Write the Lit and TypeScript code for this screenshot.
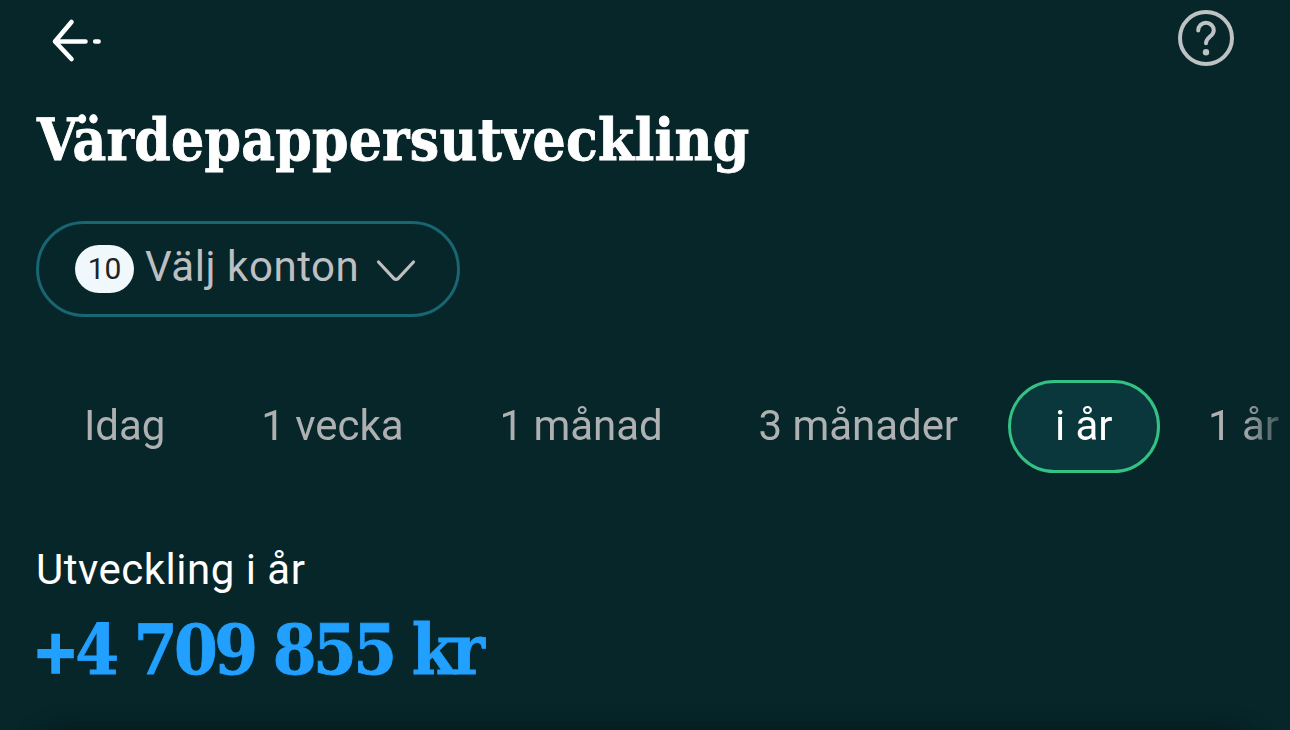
import { LitElement, css, html } from "lit";
import { classMap } from "lit/directives/class-map.js";

const PERIODS = ["Idag", "1 vecka", "1 månad", "3 månader", "i år", "1 år"];

export class PeriodTabs extends LitElement {
  static properties = {
    selected: { type: String },
  };

  declare selected: string;

  static styles = css`
    :host {
      display: block;
    }

    .tabs {
      display: flex;
      width: 1254px;
      -webkit-mask-image: linear-gradient(to right, #000 1205px, rgba(0, 0, 0, 0.35) 1244px);
      mask-image: linear-gradient(to right, #000 1205px, rgba(0, 0, 0, 0.35) 1244px);
    }

    .tab {
      flex: none;
      box-sizing: border-box;
      height: 93px;
      padding: 0 45px 1px;
      border: 3px solid transparent;
      border-radius: 47px;
      background: none;
      color: #aeb0b2;
      font: 400 42px/86px Roboto, sans-serif;
      letter-spacing: -0.05px;
      white-space: nowrap;
    }

    .tab:last-child {
      padding-right: 0;
    }

    .tab.active {
      margin-left: 1.5px;
      padding: 0 44.5px 1px;
      border-color: #35c184;
      background: #0a373c;
      color: #fff;
    }
  `;

  constructor() {
    super();
    this.selected = "i år";
  }

  render() {
    return html`
      <div class="tabs">
        ${PERIODS.map(
          (period) => html`
            <button
              type="button"
              class=${classMap({ tab: true, active: period === this.selected })}
              @click=${() => (this.selected = period)}
            >${period}</button>
          `
        )}
      </div>
    `;
  }
}

customElements.define("period-tabs", PeriodTabs);

export class AppRoot extends LitElement {
  static styles = css`
    :host {
      display: flex;
      flex-direction: column;
      box-sizing: border-box;
      height: 730px;
      padding: 0 0 0 36px;
      overflow: hidden;
      background: #062629;
      color: #fff;
      font-family: Roboto, sans-serif;
    }

    header,
    h1,
    .accounts,
    period-tabs,
    .caption,
    .amount,
    .sheet {
      flex: none;
    }

    svg {
      display: block;
      fill: none;
      stroke: currentColor;
      stroke-linecap: round;
      stroke-linejoin: round;
    }

    header {
      display: flex;
      justify-content: space-between;
      height: 80px;
      padding: 0 52px 0 8px;
    }

    .icon {
      padding: 0;
      border: 0;
      background: none;
      color: #fff;
    }

    .help {
      color: #bec2c4;
    }

    h1,
    .amount {
      margin: 0;
      font-family: "DejaVu Serif", serif;
      font-weight: 700;
      font-stretch: condensed;
      white-space: nowrap;
      -webkit-text-stroke: 0.8px currentColor;
    }

    h1 {
      height: 141px;
      padding-left: 1px;
      font-size: 58px;
      line-height: 121px;
      letter-spacing: 0.25px;
    }

    .accounts {
      display: flex;
      align-items: center;
      align-self: flex-start;
      box-sizing: border-box;
      width: 424px;
      height: 96px;
      padding: 0 36px;
      border: 3px solid #196571;
      border-radius: 48px;
      background: none;
      color: #bebfc0;
      font: 400 42px/90px Roboto, sans-serif;
      letter-spacing: 0.55px;
      white-space: nowrap;
    }

    .count {
      flex: none;
      width: 59px;
      height: 48px;
      margin-right: 11px;
      border-radius: 24px;
      background: #f0f8fb;
      color: #222;
      font-size: 30px;
      line-height: 47px;
      letter-spacing: 0;
      text-align: center;
    }

    .label {
      height: 94px;
    }

    .chevron {
      flex: none;
      margin: 4px 0 0 17px;
    }

    period-tabs {
      margin-top: 63px;
    }

    .caption {
      margin-top: 72px;
      font-size: 42px;
      line-height: 50px;
      letter-spacing: 0.5px;
    }

    .amount {
      height: 106px;
      margin-left: -3px;
      color: #21a0ff;
      font-size: 70px;
      line-height: 109px;
      letter-spacing: -3.6px;
    }

    .sign {
      font-size: 60px;
      line-height: 1;
      letter-spacing: -3px;
      vertical-align: 2px;
      -webkit-text-stroke-width: 2.6px;
    }

    /* shadow cast by the sheet below the fold */
    .sheet {
      height: 60px;
      margin: 29px 36px 0 0;
      border-radius: 40px;
      box-shadow: 0 0 22px rgba(10, 12, 18, 0.6);
    }
  `;

  render() {
    return html`
      <header>
        <button type="button" class="icon" aria-label="Tillbaka">
          <svg width="64" height="80" viewBox="44 0 64 80" stroke-width="4.6">
            <path d="M71.5 22 55 41.5 71.5 59M55 41.5H85.5M95.2 41.5H98.6" />
          </svg>
        </button>
        <button type="button" class="icon help" aria-label="Hjälp">
          <svg width="64" height="80" viewBox="1174 0 64 80" stroke-width="4">
            <circle cx="1206" cy="38" r="26" />
            <path d="M1198.2 30.5A7.8 7.8 0 0 1 1213.8 30.5C1213.8 36.2 1206 37 1206 43.2" />
            <circle cx="1206" cy="52.3" r="3.2" fill="currentColor" stroke="none" />
          </svg>
        </button>
      </header>
      <h1>Värdepappersutveckling</h1>
      <button type="button" class="accounts">
        <span class="count">10</span>
        <span class="label">Välj konton</span>
        <svg class="chevron" width="40" height="24" viewBox="0 0 40 24" stroke-width="3.2">
          <path d="M2.5 3 17.5 19.2Q20 21.5 22.5 19.2L37.5 3" />
        </svg>
      </button>
      <period-tabs></period-tabs>
      <div class="caption">Utveckling i år</div>
      <div class="amount"><span class="sign">+</span>4 709 855 kr</div>
      <div class="sheet"></div>
    `;
  }
}

customElements.define("app-root", AppRoot);
